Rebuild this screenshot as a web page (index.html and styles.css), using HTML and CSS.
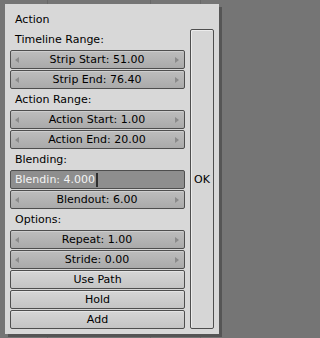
FILE: index.html
```html
<!DOCTYPE html>
<html>
<head>
<meta charset="utf-8">
<link rel="stylesheet" href="styles.css">
</head>
<body>
<div class="panel">
  <div class="col">
    <div class="label">Action</div>
    <div class="label">Timeline Range:</div>
    <div class="btn num"><span class="arr l"></span><span class="txt">Strip Start: 51.00</span><span class="arr r"></span></div>
    <div class="btn num"><span class="arr l"></span><span class="txt">Strip End: 76.40</span><span class="arr r"></span></div>
    <div class="label">Action Range:</div>
    <div class="btn num"><span class="arr l"></span><span class="txt">Action Start: 1.00</span><span class="arr r"></span></div>
    <div class="btn num"><span class="arr l"></span><span class="txt">Action End: 20.00</span><span class="arr r"></span></div>
    <div class="label">Blending:</div>
    <div class="btn edit"><span class="etxt">Blendin: 4.000</span><span class="cursor"></span></div>
    <div class="btn num"><span class="arr l"></span><span class="txt">Blendout: 6.00</span><span class="arr r"></span></div>
    <div class="label">Options:</div>
    <div class="btn num"><span class="arr l"></span><span class="txt">Repeat: 1.00</span><span class="arr r"></span></div>
    <div class="btn num"><span class="arr l"></span><span class="txt">Stride: 0.00</span><span class="arr r"></span></div>
    <div class="btn push">Use Path</div>
    <div class="btn push">Hold</div>
    <div class="btn push">Add</div>
  </div>
  <div class="ok">OK</div>
</div>
</body>
</html>
```
FILE: styles.css
```css
html, body {
  margin: 0;
  padding: 0;
}
body {
  width: 226px;
  height: 338px;
  overflow: hidden;
  font-family: "DejaVu Sans", sans-serif;
  font-size: 11px;
  color: #000;
  background-color: #757575;
  background-image:
    linear-gradient(to right, transparent 47px, #686868 47px, #686868 48px, transparent 48px),
    linear-gradient(to right, transparent 150px, #686868 150px, #686868 151px, transparent 151px),
    linear-gradient(to right, transparent 200px, #686868 200px, #686868 201px, transparent 201px);
  padding-top: 4px;
  padding-left: 5px;
  box-sizing: border-box;
}
.panel {
  width: 214px;
  height: 330px;
  box-sizing: border-box;
  background: #d8d8d8;
  padding: 6px 5px 4px 5px;
  display: flex;
  gap: 5px;
  box-shadow: 3px 3px 0 #555555;
}
.col {
  width: 175px;
  display: flex;
  flex-direction: column;
}
.label {
  height: 20px;
  line-height: 20px;
  padding-left: 5px;
}
.btn {
  height: 19px;
  margin-bottom: 1px;
  box-sizing: border-box;
  border: 1px solid #4e4e4e;
  border-radius: 2px;
  display: flex;
  align-items: center;
  line-height: 17px;
}
.num {
  background: linear-gradient(#bdbdbd, #aaaaaa);
  box-shadow: inset 0 1px 0 #cdcdcd;
  padding: 0 5px 0 4px;
}
.num .txt {
  flex: 1;
  text-align: center;
}
.arr {
  width: 0;
  height: 0;
  border-top: 3.5px solid transparent;
  border-bottom: 3.5px solid transparent;
}
.arr.l {
  border-right: 4px solid #8a8a8a;
}
.arr.r {
  border-left: 4px solid #8a8a8a;
}
.push {
  justify-content: center;
  background: linear-gradient(#d6d6d6, #c4c4c4);
  box-shadow: inset 0 1px 0 #e4e4e4;
}
.edit {
  background: #8e8e8e;
  padding-left: 4px;
  color: #f4f4f4;
}
.cursor {
  width: 2px;
  height: 14px;
  background: #2e2e2e;
  margin-left: 1px;
}
.ok {
  width: 24px;
  margin-top: 19px;
  margin-bottom: 1px;
  box-sizing: border-box;
  border: 1px solid #4e4e4e;
  border-radius: 2px;
  background: #d6d6d6;
  box-shadow: inset 1px 1px 0 #ececec;
  display: flex;
  align-items: center;
  justify-content: center;
}
```
